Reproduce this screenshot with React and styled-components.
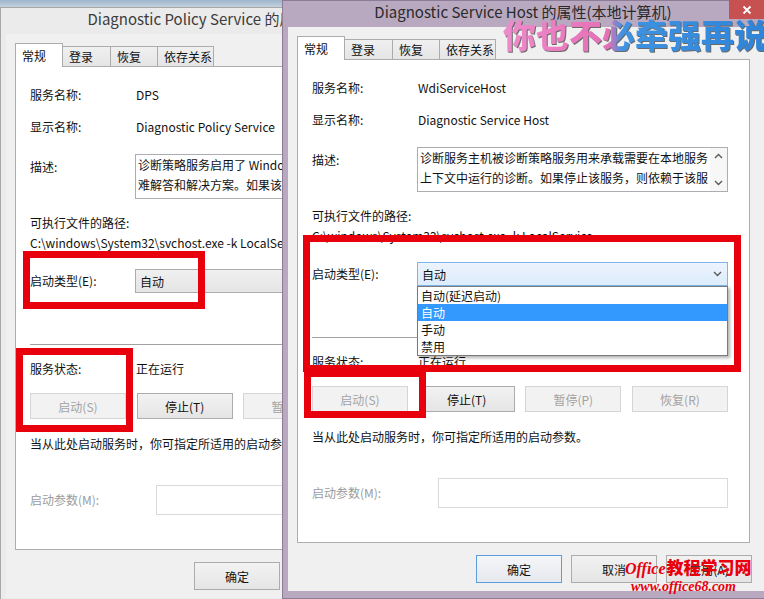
import React from 'react';
import styled, { createGlobalStyle } from 'styled-components';

const GlobalStyle = createGlobalStyle`
  html, body {
    margin: 0;
    padding: 0;
  }
  body {
    width: 764px;
    height: 599px;
    overflow: hidden;
    background: #f0f0f0;
    font-family: "Noto Sans CJK SC", "Noto Sans", sans-serif;
  }
`;

const Desktop = styled.div`
  position: relative;
  width: 764px;
  height: 599px;
  overflow: hidden;
  background: linear-gradient(180deg, #9db5cb 0px, #c8d5e0 8px, #dfe5ea 100%);
`;

const Window = styled.div`
  position: absolute;
  left: ${p => p.$x}px;
  top: ${p => p.$y}px;
  width: 490px;
  height: 599px;
  box-sizing: border-box;
  display: flex;
  flex-direction: column;
  padding: 0 5px 7px 5px;
  background: ${p => (p.$active ? '#b8a8c0' : '#ebebeb')};
  border: 1px solid ${p => (p.$active ? '#8c7c96' : '#a8a8a8')};
`;

const TitleBar = styled.div`
  display: grid;
  grid-template-columns: 1fr auto 1fr;
  align-items: start;
  height: 26px;
  padding-right: 8px;
`;

const TitleText = styled.div`
  grid-column: 2;
  font-size: 15px;
  line-height: 21px;
  color: ${p => (p.$active ? '#2a2a2a' : '#3c3c3c')};
  white-space: nowrap;
`;

const CloseButton = styled.div`
  grid-column: 3;
  justify-self: end;
  margin: -1px -6px 0 0;
  width: 35px;
  height: 19px;
  display: flex;
  align-items: center;
  justify-content: center;
  background: ${p => (p.$active ? '#c75050' : 'transparent')};
`;

const Client = styled.div`
  flex: 1;
  display: flex;
  flex-direction: column;
  background: #f0f0f0;
  padding: 9px 16px 0 9px;
`;

const TabStrip = styled.div`
  display: flex;
  align-items: flex-end;
  height: 24px;
  margin-bottom: -1px;
  position: relative;
  z-index: 1;
`;

const Tab = styled.div`
  box-sizing: border-box;
  width: ${p => p.$w}px;
  height: ${p => (p.$selected ? 24 : 20)}px;
  margin-bottom: ${p => (p.$selected ? 0 : 1)}px;
  margin-left: ${p => (p.$first ? 0 : -1)}px;
  padding-left: 6px;
  display: flex;
  align-items: center;
  font-size: 12px;
  color: #111;
  border: 1px solid #acacac;
  border-bottom: none;
  background: ${p => (p.$selected ? '#fff' : 'linear-gradient(#f0f0f0, #e5e5e5)')};
  position: relative;
  z-index: ${p => (p.$selected ? 2 : 1)};
`;

const Panel = styled.div`
  box-sizing: border-box;
  height: 484px;
  background: #fff;
  border: 1px solid #adadad;
  padding: 18px 21px 0 14px;
  display: flex;
  flex-direction: column;
`;

const Row = styled.div`
  display: flex;
  align-items: ${p => (p.$top ? 'flex-start' : 'center')};
  height: ${p => p.$h || 20}px;
  margin-top: ${p => p.$mt || 0}px;
  font-size: 12px;
  color: #111;
  white-space: nowrap;
`;

const Label = styled.div`
  flex: none;
  width: ${p => p.$w || 106}px;
  line-height: 20px;
  padding-top: ${p => p.$pt || 0}px;
  color: ${p => (p.$disabled ? '#9c9c9c' : '#111')};
`;

const Value = styled.div`
  line-height: 20px;
`;

const TextBox = styled.div`
  box-sizing: border-box;
  width: 311px;
  height: 45px;
  margin-left: -1px;
  border: 1px solid #abadb3;
  background: #fff;
  display: flex;
  overflow: hidden;
`;

const TextLines = styled.div`
  flex: 1;
  padding: 0 0 0 2px;
  line-height: 20px;
  overflow: hidden;
  white-space: nowrap;
`;

const ScrollTrack = styled.div`
  flex: none;
  width: 17px;
  display: flex;
  flex-direction: column;
  justify-content: space-between;
  align-items: center;
  padding: 5px 0 5px;
  background: #f7f7f7;
`;

const SelectBox = styled.div`
  position: relative;
  box-sizing: border-box;
  width: 311px;
  height: 24px;
  margin-left: -1px;
  display: flex;
  align-items: center;
  justify-content: space-between;
  padding: 0 5px 0 4px;
  border: 1px solid ${p => (p.$open ? '#7eb4ea' : '#acacac')};
  background: ${p =>
    p.$open ? 'linear-gradient(#ecf4fc, #dcecfc)' : 'linear-gradient(#f0f0f0, #e5e5e5)'};
`;

const DropList = styled.ul`
  position: absolute;
  left: -1px;
  top: calc(100% + 1px);
  width: calc(100% + 2px);
  box-sizing: border-box;
  margin: 0;
  padding: 0;
  list-style: none;
  background: #fff;
  border: 1px solid #7a7a7a;
  box-shadow: 2px 2px 3px rgba(0, 0, 0, 0.3);
  z-index: 5;
`;

const DropItem = styled.li`
  height: 17px;
  line-height: 17px;
  padding-left: 3px;
  font-size: 12px;
  background: ${p => (p.$hot ? '#3399ff' : '#fff')};
  color: ${p => (p.$hot ? '#fff' : '#111')};
`;

const Separator = styled.div`
  height: 1px;
  margin-top: ${p => p.$mt}px;
  background: #a0a0a0;
`;

const ButtonRow = styled.div`
  display: flex;
  justify-content: space-between;
  margin-top: 14px;
`;

const PushButton = styled.div`
  box-sizing: border-box;
  width: ${p => p.$w || 96}px;
  height: ${p => p.$h || 26}px;
  display: flex;
  align-items: center;
  justify-content: center;
  font-size: 12px;
  color: ${p => (p.$disabled ? '#a3a3a3' : '#111')};
  border: 1px solid ${p => (p.$disabled ? '#d5d5d5' : p.$default ? '#5a9ee0' : '#acacac')};
  background: ${p =>
    p.$disabled ? '#f2f2f2' : p.$default ? 'linear-gradient(#f4f6f9, #e6e9ee)' : 'linear-gradient(#f2f2f2, #e5e5e5)'};
`;

const InputBox = styled.div`
  flex: 1;
  height: 30px;
  box-sizing: border-box;
  border: 1px solid #d9d9d9;
  background: #fff;
`;

const Footer = styled.div`
  display: flex;
  justify-content: flex-end;
  gap: 9px;
  margin-top: 12px;
  margin-right: -2px;
`;

const RedFrame = styled.div`
  position: absolute;
  left: ${p => p.$x}px;
  top: ${p => p.$y}px;
  width: ${p => p.$w}px;
  height: ${p => p.$h}px;
  box-sizing: border-box;
  border: 7px solid #e8000d;
  z-index: 10;
  pointer-events: none;
`;

const Slogan = styled.div`
  position: absolute;
  left: 503px;
  top: 16px;
  font-size: 33px;
  line-height: 37px;
  font-weight: 900;
  white-space: nowrap;
  color: transparent;
  background: linear-gradient(90deg, #ee8ccb 0%, #e470b6 40%, #3f93e2 45%, #2f84d8 100%);
  -webkit-background-clip: text;
  background-clip: text;
  filter: drop-shadow(1px 1px 0 #6a6a6a);
  z-index: 20;
`;

const SiteMark = styled.div`
  position: absolute;
  left: 625px;
  top: 558px;
  color: #e8000d;
  z-index: 20;
  line-height: 1;
  white-space: nowrap;
`;

const SiteName = styled.div`
  display: flex;
  align-items: baseline;
`;

const SiteLatin = styled.span`
  font-family: "Liberation Serif", serif;
  font-style: italic;
  font-weight: 700;
  font-size: 16px;
`;

const SiteCjk = styled.span`
  font-family: "Noto Sans CJK SC", sans-serif;
  font-weight: 900;
  font-size: 17px;
  margin-left: 1px;
`;

const SiteUrl = styled.div`
  font-family: "Liberation Serif", serif;
  font-style: italic;
  font-weight: 700;
  font-size: 14px;
  margin: 3px 0 0 6px;
`;

const Chevron = ({ up, color = '#5a5a5a' }) => (
  <svg width="9" height="6" viewBox="0 0 9 6">
    <path d={up ? 'M1 5L4.5 1.5L8 5' : 'M1 1L4.5 4.5L8 1'} fill="none" stroke={color} strokeWidth="1.4" />
  </svg>
);

const tabs = [
  { label: '常规', w: 48 },
  { label: '登录', w: 49 },
  { label: '恢复', w: 48 },
  { label: '依存关系', w: 57 },
];

const options = ['自动(延迟启动)', '自动', '手动', '禁用'];

function ServiceDialog({ x, y, active, info, open }) {
  return (
    <Window $x={x} $y={y} $active={active}>
      <TitleBar>
        <TitleText $active={active}>{info.title}</TitleText>
        <CloseButton $active={active}>
          <svg width="10" height="10" viewBox="0 0 10 10">
            <path d="M1.5 1.5L8.5 8.5M8.5 1.5L1.5 8.5" stroke={active ? '#fff' : '#555'} strokeWidth="1.8" />
          </svg>
        </CloseButton>
      </TitleBar>
      <Client>
        <TabStrip>
          {tabs.map((t, i) => (
            <Tab key={t.label} $w={t.w} $selected={i === 0} $first={i === 0}>
              {t.label}
            </Tab>
          ))}
        </TabStrip>
        <Panel>
          <Row>
            <Label>服务名称:</Label>
            <Value>{info.name}</Value>
          </Row>
          <Row $mt={12}>
            <Label>显示名称:</Label>
            <Value>{info.display}</Value>
          </Row>
          <Row $mt={17} $h={45} $top>
            <Label $pt={3}>描述:</Label>
            <TextBox>
              <TextLines>
                {info.desc.map(line => (
                  <div key={line}>{line}</div>
                ))}
              </TextLines>
              <ScrollTrack>
                <Chevron up />
                <Chevron />
              </ScrollTrack>
            </TextBox>
          </Row>
          <Row $mt={14}>
            <Value>可执行文件的路径:</Value>
          </Row>
          <Row>
            <Value>{info.path}</Value>
          </Row>
          <Row $mt={16} $h={24}>
            <Label>启动类型(E):</Label>
            <SelectBox $open={open}>
              <span>自动</span>
              <Chevron />
              {open && (
                <DropList>
                  {options.map(o => (
                    <DropItem key={o} $hot={o === '自动'}>
                      {o}
                    </DropItem>
                  ))}
                </DropList>
              )}
            </SelectBox>
          </Row>
          <Separator $mt={51} />
          <Row $mt={14}>
            <Label>服务状态:</Label>
            <Value>正在运行</Value>
          </Row>
          <ButtonRow>
            <PushButton $disabled>启动(S)</PushButton>
            <PushButton>停止(T)</PushButton>
            <PushButton $disabled>暂停(P)</PushButton>
            <PushButton $disabled>恢复(R)</PushButton>
          </ButtonRow>
          <Row $mt={15}>
            <Value>当从此处启动服务时，你可指定所适用的启动参数。</Value>
          </Row>
          <Row $mt={31} $h={30}>
            <Label $w={126} $disabled>
              启动参数(M):
            </Label>
            <InputBox />
          </Row>
        </Panel>
        <Footer>
          <PushButton $w={86} $h={28} $default={active}>
            确定
          </PushButton>
          <PushButton $w={86} $h={28}>
            取消
          </PushButton>
          <PushButton $w={86} $h={28}>
            应用(A)
          </PushButton>
        </Footer>
      </Client>
    </Window>
  );
}

const policyService = {
  title: 'Diagnostic Policy Service 的属性(本地计算机)',
  name: 'DPS',
  display: 'Diagnostic Policy Service',
  desc: ['诊断策略服务启用了 Windows 组件的问题检测、疑', '难解答和解决方案。如果该服务被停止，诊断将不再运行。'],
  path: 'C:\\windows\\System32\\svchost.exe -k LocalServiceNoNetwork',
};

const serviceHost = {
  title: 'Diagnostic Service Host 的属性(本地计算机)',
  name: 'WdiServiceHost',
  display: 'Diagnostic Service Host',
  desc: ['诊断服务主机被诊断策略服务用来承载需要在本地服务', '上下文中运行的诊断。如果停止该服务，则依赖于该服'],
  path: 'C:\\windows\\System32\\svchost.exe -k LocalService',
};

export default function App() {
  return (
    <Desktop>
      <GlobalStyle />
      <ServiceDialog x={0} y={7} info={policyService} />
      <ServiceDialog x={282} y={0} active open info={serviceHost} />

      <RedFrame $x={23} $y={251} $w={182} $h={58} />
      <RedFrame $x={16} $y={348} $w={117} $h={84} />
      <RedFrame $x={303} $y={235} $w={438} $h={137} />
      <RedFrame $x={304} $y={370} $w={122} $h={48} />

      <Slogan>你也不必牵强再说</Slogan>
      <SiteMark>
        <SiteName>
          <SiteLatin>Office</SiteLatin>
          <SiteCjk>教程学习网</SiteCjk>
        </SiteName>
        <SiteUrl>www.office68.com</SiteUrl>
      </SiteMark>
    </Desktop>
  );
}
